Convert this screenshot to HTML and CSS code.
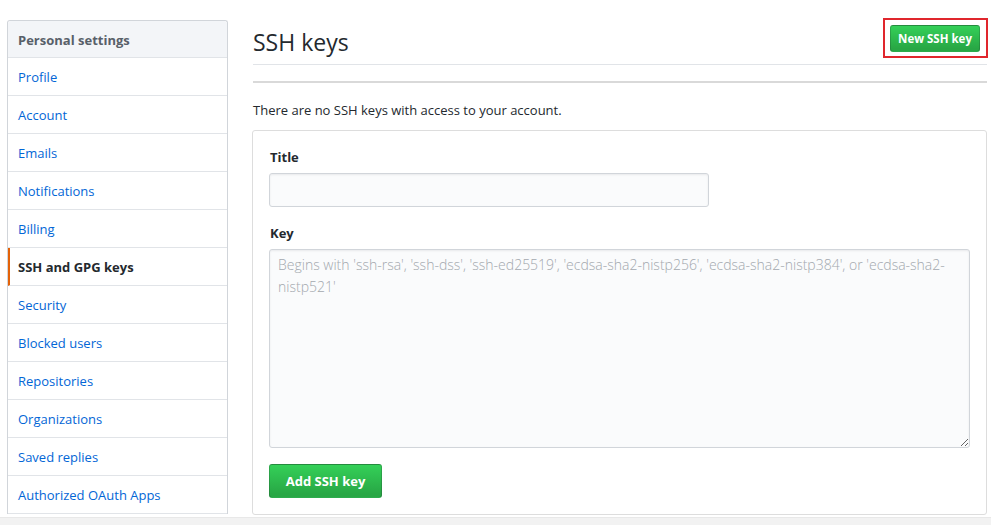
FILE: index.html
```html
<!DOCTYPE html>
<html lang="en">
<head>
<meta charset="utf-8">
<title>SSH keys</title>
<link rel="stylesheet" href="styles.css">
</head>
<body>
<div class="page">
  <nav class="menu">
    <h3 class="menu-heading">Personal settings</h3>
    <a class="menu-item" href="#">Profile</a>
    <a class="menu-item" href="#">Account</a>
    <a class="menu-item" href="#">Emails</a>
    <a class="menu-item" href="#">Notifications</a>
    <a class="menu-item" href="#">Billing</a>
    <a class="menu-item selected" href="#">SSH and GPG keys</a>
    <a class="menu-item" href="#">Security</a>
    <a class="menu-item" href="#">Blocked users</a>
    <a class="menu-item" href="#">Repositories</a>
    <a class="menu-item" href="#">Organizations</a>
    <a class="menu-item" href="#">Saved replies</a>
    <a class="menu-item" href="#">Authorized OAuth Apps</a>
  </nav>
  <main class="content">
    <div class="subhead">
      <h2 class="subhead-title">SSH keys</h2>
      <span class="highlight-box"><button class="btn btn-sm" type="button">New SSH key</button></span>
    </div>
    <div class="listgroup"></div>
    <p class="blankslate">There are no SSH keys with access to your account.</p>
    <form class="boxed">
      <label class="label" for="title">Title</label>
      <input class="input" id="title" type="text">
      <label class="label key-label" for="key">Key</label>
      <textarea class="textarea" id="key" placeholder="Begins with 'ssh-rsa', 'ssh-dss', 'ssh-ed25519', 'ecdsa-sha2-nistp256', 'ecdsa-sha2-nistp384', or 'ecdsa-sha2-nistp521'"></textarea>
      <button class="btn btn-add" type="button">Add SSH key</button>
    </form>
  </main>
</div>
<div class="bottom-strip"></div>
</body>
</html>
```

FILE: styles.css
```css
html, body {
  margin: 0;
  padding: 0;
  height: 525px;
  overflow: hidden;
  background: #fff;
}
body {
  font-family: "Open Sans", "Noto Sans", sans-serif;
  font-size: 13px;
  color: #24292e;
}
.page {
  display: flex;
  align-items: flex-start;
  padding: 20px 4px 0 7px;
  gap: 24px;
}
.menu {
  width: 219px;
  flex: none;
  border: 1px solid #d1d5da;
  border-bottom: none;
  border-radius: 3px 3px 0 0;
  display: flex;
  flex-direction: column;
}
.menu-heading {
  margin: 0;
  height: 36px;
  line-height: 38px;
  padding: 0 10px;
  font-size: 13px;
  font-weight: 700;
  color: #586069;
  background: #f3f5f8;
  border-bottom: 1px solid #e1e4e8;
  border-radius: 3px 3px 0 0;
}
.menu-item {
  height: 37px;
  line-height: 39px;
  padding: 0 10px;
  border-bottom: 1px solid #e1e4e8;
  color: #0366d6;
  text-decoration: none;
}
.menu-item.selected {
  padding-left: 8px;
  border-left: 2px solid #e36209;
  font-weight: 700;
  color: #24292e;
}
.content {
  flex: 1;
  min-width: 0;
}
.subhead {
  display: flex;
  justify-content: space-between;
  align-items: flex-start;
  height: 44px;
  border-bottom: 1px solid #e1e4e8;
  margin-left: 1px;
}
.subhead-title {
  margin: 7px 0 0;
  font-size: 23px;
  font-weight: 400;
  line-height: 30px;
}
.btn {
  font-family: inherit;
  font-weight: 700;
  color: #fff;
  background-color: #28a745;
  background-image: linear-gradient(-180deg, #34d058 0%, #28a745 90%);
  border: 1px solid rgba(27, 31, 35, 0.2);
  border-radius: 3px;
  cursor: pointer;
}
.highlight-box {
  display: flex;
  margin: -2px -1px 0 0;
  padding: 5px 6px 4px 5px;
  border: 2px solid #e0262d;
}
.btn-sm {
  width: 90px;
  height: 27px;
  padding: 0;
  font-size: 11.5px;
}
.listgroup {
  margin: 16px 0 0 1px;
  border-top: 2px solid #d9d9d9;
}
.blankslate {
  margin: 17px 0 0 1px;
  line-height: 20px;
}
.boxed {
  margin-top: 10px;
  border: 1px solid #dddddd;
  border-radius: 3px;
  padding: 16px 16px 16px 16px;
  display: flex;
  flex-direction: column;
  align-items: flex-start;
}
.label {
  font-weight: 700;
  line-height: 20px;
  margin: 0 0 6px 1px;
}
.key-label {
  margin-top: 16px;
}
.input {
  box-sizing: border-box;
  width: 440px;
  height: 34px;
  background: #fafbfc;
  border: 1px solid #d1d5da;
  border-radius: 3px;
  box-shadow: inset 0 1px 2px rgba(27, 31, 35, 0.075);
  margin: 0;
}
.textarea {
  box-sizing: border-box;
  width: 701px;
  height: 199px;
  background: #fafbfc;
  border: 1px solid #d1d5da;
  border-radius: 3px;
  box-shadow: inset 0 1px 2px rgba(27, 31, 35, 0.075);
  padding: 4px 8px;
  margin: 0;
  font-family: "Open Sans", "Noto Sans", sans-serif;
  font-size: 14px;
  line-height: 22px;
  resize: vertical;
}
.textarea::placeholder {
  color: #a3a8ae;
  font-weight: 300;
}
.btn-add {
  margin-top: 16px;
  width: 113px;
  height: 34px;
  padding: 0;
  font-size: 13px;
}
.bottom-strip {
  position: fixed;
  left: 0;
  right: 0;
  bottom: 0;
  height: 7px;
  background: #f2f2f2;
  border-top: 1px solid #e8e8e8;
}
```
